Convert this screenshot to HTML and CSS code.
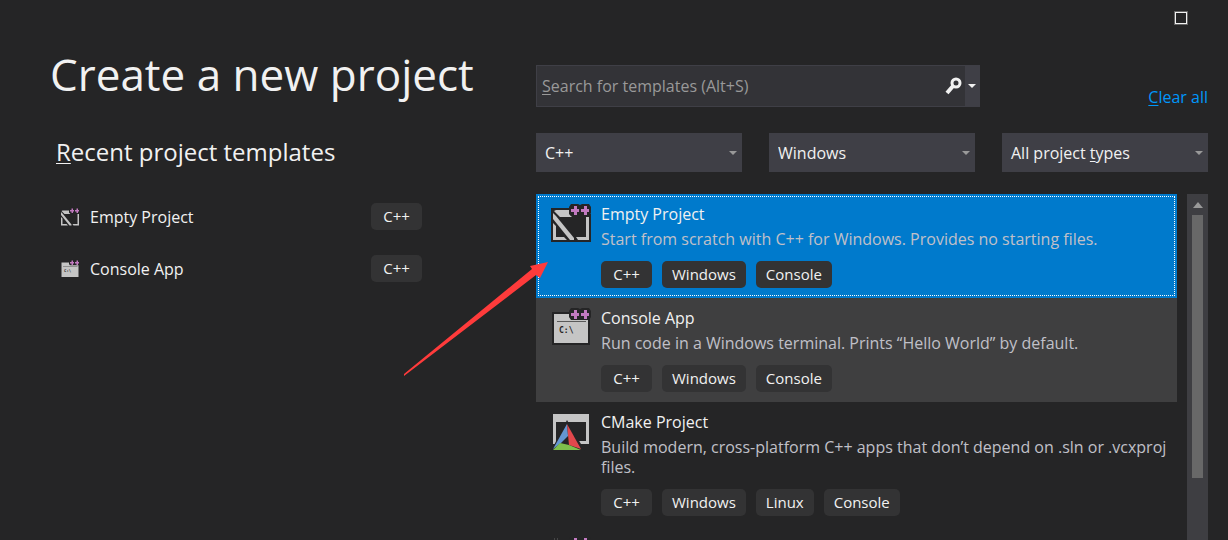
FILE: index.html
```html
<!DOCTYPE html>
<html lang="en">
<head>
<meta charset="utf-8">
<title>Create a new project</title>
<link rel="stylesheet" href="styles.css">
</head>
<body>
<svg class="sprite" aria-hidden="true">
  <symbol id="plusplus" viewBox="0 0 22 12">
    <path fill="#252526" d="M2 0h7l2 1 2-1h7l2 3v6l-2 3H2L0 9V3z"/>
    <path fill="#c27ac0" d="M5 2h3v3h2v3H8v3H5V8H2V5h3zM15 2h3v3h2v3h-2v3h-3V8h-3V5h3z"/>
  </symbol>
  <symbol id="empty" viewBox="0 0 40 40">
    <path fill="#252526" d="M0 5h19v6h21v28H0z"/>
    <path fill="#c5c5c5" d="M5 7h13v4l3 3H9L3 8zM35 14h3v23H27l-2-3h10zM2 20l3 3v11h8l3 3H2z"/>
    <path fill="#c5c5c5" d="M2 10l3 3 18 22v2h-4L2 16z"/>
    <use href="#plusplus" x="18" y="1" width="22" height="12"/>
  </symbol>
  <symbol id="console" viewBox="0 0 40 40">
    <path fill="#252526" d="M1 5h38v33H1z"/>
    <path fill="#c5c5c5" d="M3 7h34v29H3z"/>
    <path fill="#5a5a5a" d="M6 14h29v1H6z"/>
    <text class="prompt" x="8" y="26">C:\</text>
    <use href="#plusplus" x="18" y="1" width="22" height="12"/>
  </symbol>
</svg>
<div class="app">
  <header class="titlebar">
    <button class="maximize" type="button" aria-label="Maximize"></button>
  </header>
  <main class="layout">
    <section class="recent">
      <h1>Create a new project</h1>
      <h2><u>R</u>ecent project templates</h2>
      <ul class="recent-list">
        <li><svg class="icon-small"><use href="#empty"/></svg><span class="recent-name">Empty Project</span><span class="tag">C++</span></li>
        <li><svg class="icon-small"><use href="#console"/></svg><span class="recent-name">Console App</span><span class="tag">C++</span></li>
      </ul>
    </section>
    <section class="browse">
      <div class="search-row">
        <div class="search">
          <input id="search" type="text" accesskey="s">
          <label for="search"><u>S</u>earch for templates (Alt+S)</label>
          <button class="search-go" type="button" aria-label="Search">
            <svg width="18" height="18" viewBox="0 0 18 18"><circle cx="11" cy="6" r="4" fill="none" stroke="#f1f1f1" stroke-width="3"/><path d="M8 9l-6 7" stroke="#f1f1f1" stroke-width="4"/></svg>
          </button>
          <button class="search-more" type="button" aria-label="Search options"><span class="caret"></span></button>
        </div>
        <a class="clear" href="#"><u>C</u>lear all</a>
      </div>
      <div class="filters">
        <div class="filter"><select aria-label="Language"><option>C++</option></select><span class="caret"></span></div>
        <div class="filter"><select aria-label="Platform"><option>Windows</option></select><span class="caret"></span></div>
        <div class="filter"><select id="types"><option></option></select><label for="types">All project <u>t</u>ypes</label><span class="caret"></span></div>
      </div>
      <div class="results">
        <ul class="templates">
          <li class="template selected">
            <svg class="icon"><use href="#empty"/></svg>
            <div class="details">
              <h3>Empty Project</h3>
              <p>Start from scratch with C++ for Windows. Provides no starting files.</p>
              <div class="tags"><span class="tag">C++</span><span class="tag">Windows</span><span class="tag">Console</span></div>
            </div>
          </li>
          <li class="template hovered">
            <svg class="icon"><use href="#console"/></svg>
            <div class="details">
              <h3>Console App</h3>
              <p>Run code in a Windows terminal. Prints “Hello World” by default.</p>
              <div class="tags"><span class="tag">C++</span><span class="tag">Windows</span><span class="tag">Console</span></div>
            </div>
          </li>
          <li class="template">
            <svg class="icon" viewBox="0 0 40 40">
              <path fill="#c5c5c5" d="M2 3h36v30H28v-3h7V11H5v22H2z"/>
              <path fill="#252526" d="M16 9L0 40h34z"/>
              <path fill="#6496d2" d="M16 13l1 12-7 7-8 6z"/>
              <path fill="#e2484c" d="M16 13l14 25-12-4z"/>
              <path fill="#7ebf4c" d="M2 39l7-7 9 2 12 5z"/>
            </svg>
            <div class="details">
              <h3>CMake Project</h3>
              <p>Build modern, cross-platform C++ apps that don’t depend on .sln or .vcxproj files.</p>
              <div class="tags"><span class="tag">C++</span><span class="tag">Windows</span><span class="tag">Linux</span><span class="tag">Console</span></div>
            </div>
          </li>
          <li class="template">
            <svg class="icon" viewBox="0 0 40 40"><path stroke="#666" stroke-dasharray="1 2" d="M3 4h6"/><use href="#plusplus" x="18" y="1" width="22" height="12"/></svg>
          </li>
        </ul>
        <div class="scrollbar"><span class="scroll-up"></span><span class="thumb"></span></div>
      </div>
    </section>
  </main>
  <svg class="arrow" viewBox="0 0 146 116" aria-hidden="true"><path fill="#ff3b3b" d="M145 1l-18 4 2 3L1 113v2l132-101 4 3z"/></svg>
</div>
</body>
</html>
```
FILE: styles.css
```css
* { box-sizing: border-box; }
body {
  margin: 0;
  background: #252526;
  color: #f1f1f1;
  font: 16px/20px "Open Sans", "Noto Sans", sans-serif;
}
h1, h2, h3, p, ul { margin: 0; padding: 0; font-weight: 400; }
ul { list-style: none; }
u { text-underline-offset: 2px; text-decoration-thickness: 1px; }
button, input, select { font: inherit; color: inherit; border: 0; border-radius: 0; padding: 0; }
.sprite { display: none; }
.prompt { font: bold 8px "DejaVu Sans Mono", monospace; fill: #252526; }
.app { position: relative; display: flex; flex-direction: column; height: 100vh; overflow: hidden; }
.titlebar { display: flex; justify-content: flex-end; flex: none; height: 44px; padding: 12px 41px 0 0; }
.maximize { width: 12px; height: 12px; background: none; border: 1px solid #f1f1f1; outline: 1px solid #666; }
.layout { flex: 1; min-height: 0; display: grid; grid-template-columns: 372px minmax(0, 1fr); column-gap: 114px; grid-template-rows: minmax(0, 1fr); padding: 0 20px 0 50px; }
h1 { font-size: 44px; line-height: 60px; white-space: nowrap; }
h2 { margin: 32px 0 0 6px; font-size: 24px; line-height: 32px; white-space: nowrap; }
.recent-list { margin: 35px 0 0 10px; display: grid; gap: 25px; }
.recent-list li { display: flex; align-items: center; }
.icon-small { width: 20px; height: 20px; margin-right: 10px; }
.recent-name { flex: 1; }
.tag { min-width: 51px; padding: 0 10px; text-align: center; line-height: 27px; font-size: 15px; background: #333334; border-radius: 5px; }
.browse { display: flex; flex-direction: column; min-height: 0; padding-top: 21px; }
.search-row { display: flex; justify-content: space-between; align-items: flex-end; gap: 20px; }
.search { position: relative; display: flex; flex: 0 0 66%; height: 42px; border: 1px solid #3f3f46; background: #333337; }
.search input { flex: 1; min-width: 0; padding: 0 5px; background: none; }
.search label { position: absolute; left: 5px; top: 10px; color: #999; pointer-events: none; }
.search-go { width: 22px; background: none; display: grid; place-items: center; }
.search-more { width: 14px; background: #3f3f46; color: #f1f1f1; display: grid; place-items: center; }
.caret { border: 4px solid transparent; border-top-color: currentColor; border-bottom: 0; }
.clear { color: #0097fb; text-decoration: none; }
.filters { display: grid; grid-template-columns: repeat(3, 1fr); gap: 27px; margin-top: 26px; }
.filter { position: relative; height: 39px; background: #3f3f46; }
.filter select { width: 100%; height: 100%; padding: 0 24px 0 9px; background: none; appearance: none; }
.filter label { position: absolute; left: 9px; top: 10px; pointer-events: none; }
.filter .caret { position: absolute; right: 5px; top: 18px; color: #999; pointer-events: none; }
.results { flex: 1; min-height: 0; display: flex; gap: 10px; margin-top: 22px; }
.templates { flex: 1; overflow: hidden; }
.template { display: flex; gap: 10px; padding: 8px 5px 10px 15px; }
.selected { background: #007acc; outline: 1px dotted #fff; outline-offset: -3px; }
.hovered { background: #3f3f40; }
.icon { flex: none; width: 40px; height: 40px; margin-top: 1px; }
h3 { font-size: 16px; line-height: 24px; }
.details p { color: #c0c0c8; margin-top: 3px; }
.tags { display: flex; gap: 10px; margin-top: 12px; }
.scrollbar { width: 21px; background: #3e3e42; display: flex; flex-direction: column; align-items: center; }
.scroll-up { border: 5px solid transparent; border-bottom: 6px solid #999; border-top: 0; margin: 8px 0 7px; }
.thumb { width: 11px; height: 76%; background: #686868; }
.arrow { position: absolute; left: 403px; top: 261px; width: 146px; height: 116px; pointer-events: none; }
```
